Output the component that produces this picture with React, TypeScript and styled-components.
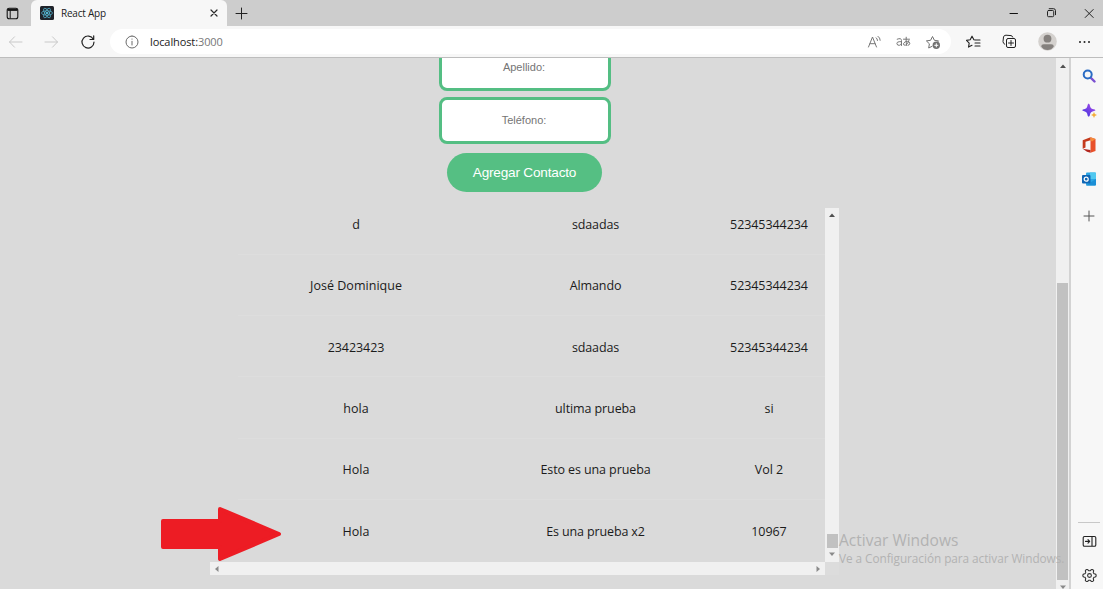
import React from "react";
import styled, { createGlobalStyle } from "styled-components";

const UI = `"Open Sans", "Noto Sans", sans-serif`;

const GlobalStyle = createGlobalStyle`
  * { box-sizing: border-box; }
  html, body { margin: 0; padding: 0; overflow: hidden; }
  body { font-family: ${UI}; background: #dadada; }
  svg { display: block; flex: none; }
`;

const Window = styled.div`
  width: 1103px;
  height: 589px;
  display: flex;
  flex-direction: column;
  overflow: hidden;
`;

const TabStrip = styled.header`
  height: 26px;
  flex: none;
  display: flex;
  background: #cdcdcd;
`;

const TabActions = styled.div`
  width: 31px;
  display: flex;
  align-items: center;
  padding-left: 6px;
`;

const Tab = styled.div`
  width: 196px;
  display: flex;
  align-items: center;
  padding: 0 8px 0 9px;
  border-radius: 6px 6px 0 0;
  background: #f7f7f7;
`;

const TabTitle = styled.span`
  flex: 1;
  margin-left: 7px;
  font-size: 10px;
  letter-spacing: -0.22px;
  line-height: 14px;
  color: #222;
`;

const NewTab = styled.div`
  display: flex;
  align-items: center;
  margin-left: 8px;
`;

const WindowButtons = styled.div`
  display: flex;
  align-items: center;
  gap: 26px;
  margin-left: auto;
  padding-right: 8px;
`;

const Toolbar = styled.div`
  height: 32px;
  flex: none;
  display: flex;
  align-items: center;
  background: #f7f7f7;
  border-bottom: 1px solid #bdbdbd;
`;

const NavButtons = styled.div`
  width: 110px;
  display: flex;
  align-items: center;
  gap: 21px;
  padding-left: 8px;
`;

const AddressBar = styled.div`
  width: 841px;
  height: 25px;
  display: flex;
  align-items: center;
  padding: 0 10px 0 15px;
  border-radius: 13px;
  background: #fff;
`;

const Url = styled.span`
  flex: 1;
  margin-left: 11px;
  font-size: 11px;
  letter-spacing: -0.1px;
  line-height: 16px;
  color: #1c1c1c;
  span { color: #777; }
`;

const AddressActions = styled.div`
  display: flex;
  align-items: center;
  gap: 14px;
`;

const BrowserActions = styled.div`
  display: flex;
  align-items: center;
  justify-content: space-between;
  flex: 1;
  padding: 0 12px 0 15px;
`;

const Body = styled.div`
  position: relative;
  flex: 1;
  display: flex;
  min-height: 0;
`;

const Page = styled.main`
  position: relative;
  width: 1056px;
  overflow: hidden;
  background: #dadada;
`;

const Form = styled.form`
  width: 172px;
  margin: -14px 0 0 439px;
  display: flex;
  flex-direction: column;
  align-items: center;
`;

const Field = styled.input`
  width: 172px;
  height: 47px;
  margin-bottom: 6px;
  padding: 0 2px 2px 0;
  border: 3px solid #54be83;
  border-radius: 8px;
  background: #fff;
  font: 11px "Liberation Sans", sans-serif;
  text-align: center;
  outline: none;
  &::placeholder { color: #757575; opacity: 1; }
`;

const Submit = styled.button`
  width: 155px;
  height: 39px;
  margin-top: 3px;
  padding: 0 0 1px;
  margin-right: 1px;
  border: 0;
  border-radius: 20px;
  background: #55bf83;
  color: #fff;
  font: 13.6px "Liberation Sans", sans-serif;
  letter-spacing: -0.2px;
`;

const TableFrame = styled.div`
  width: 629px;
  height: 367px;
  margin: 16px 0 0 210px;
  display: grid;
  grid-template-columns: 615px 14px;
  grid-template-rows: 354px 13px;
`;

const TableView = styled.div`
  overflow: hidden;
  padding-left: 28px;
`;

const Row = styled.div`
  height: 61.25px;
  display: grid;
  grid-template-columns: 236px 243px 104px;
  align-items: center;
  padding-top: 3px;
  border-bottom: 1px solid #dddddd;
  &:first-child { margin-top: -14.5px; }
  &:last-child { border-bottom: 0; }
`;

const Cell = styled.span<{ $spacing: number }>`
  text-align: center;
  font-size: 12.5px;
  line-height: 18px;
  letter-spacing: ${(p) => p.$spacing}px;
  color: #1b1b1b;
  white-space: nowrap;
`;

const VTrack = styled.div`
  display: flex;
  flex-direction: column;
  align-items: center;
  background: #f0f0f0;
`;

const HTrack = styled.div`
  display: flex;
  align-items: center;
  justify-content: space-between;
  padding: 0 4px;
  background: #f0f0f0;
`;

const Corner = styled.div`
  background: #dcdcdc;
`;

const Spacer = styled.div<{ $h: number }>`
  height: ${(p) => p.$h}px;
  flex: none;
`;

const Thumb = styled.div<{ $h: number }>`
  width: 11px;
  height: ${(p) => p.$h}px;
  flex: none;
  background: #c1c1c1;
`;

const PageTrack = styled(VTrack)`
  width: 13px;
  overflow: hidden;
`;

const Divider = styled.div`
  width: 2px;
  background: #d3d3d3;
`;

const Sidebar = styled.aside`
  flex: 1;
  display: flex;
  flex-direction: column;
  align-items: center;
  padding: 11px 0 6px 4px;
  background: #f7f7f7;
`;

const SideGroup = styled.div<{ $gap: number }>`
  display: flex;
  flex-direction: column;
  align-items: center;
  gap: ${(p) => p.$gap}px;
`;

const SideBottom = styled(SideGroup)`
  margin-top: auto;
`;

const SideRule = styled.div`
  width: 22px;
  height: 1px;
  margin-bottom: -8px;
  background: #c8c8c8;
`;

const Watermark = styled.div`
  position: absolute;
  left: 839px;
  top: 472px;
  color: #b2b2b2;
  white-space: nowrap;
`;

const WatermarkTitle = styled.div`
  font-size: 15.5px;
  line-height: 20px;
  letter-spacing: 0;
`;

const WatermarkText = styled.div`
  font-size: 11.8px;
  line-height: 17px;
  letter-spacing: -0.05px;
`;

const Pointer = styled.svg`
  position: absolute;
  left: 160px;
  top: 448px;
`;

const Arrow = ({ dir, color = "#8a8a8a" }: { dir: "up" | "down" | "left" | "right"; color?: string }) => {
  const d = { up: "M0 5 3 1.5 6 5Z", down: "M0 1.5 3 5 6 1.5Z", left: "M4.5 0 1 3 4.5 6Z", right: "M1.5 0 5 3 1.5 6Z" }[dir];
  return <svg width="6" height="6" viewBox="0 0 6 6"><path d={d} fill={color} /></svg>;
};

const Stroke = ({ w, h, d, color = "#2a2a2a", sw = 1 }: { w: number; h: number; d: string; color?: string; sw?: number }) => (
  <svg width={w} height={h} viewBox={`0 0 ${w} ${h}`} fill="none" stroke={color} strokeWidth={sw} strokeLinecap="round" strokeLinejoin="round">
    <path d={d} />
  </svg>
);

const ReactFavicon = () => (
  <svg width="14" height="14" viewBox="0 0 14 14">
    <rect width="14" height="14" rx="1.5" fill="#20232a" />
    <g fill="none" stroke="#58bcd8" strokeWidth=".7">
      <ellipse cx="7" cy="7" rx="5.4" ry="2.1" />
      <ellipse cx="7" cy="7" rx="5.4" ry="2.1" transform="rotate(60 7 7)" />
      <ellipse cx="7" cy="7" rx="5.4" ry="2.1" transform="rotate(120 7 7)" />
    </g>
    <circle cx="7" cy="7" r="1.1" fill="#61dafb" />
  </svg>
);

const gearPath = () => {
  const pts: string[] = [];
  for (let i = 0; i < 72; i++) {
    const a = (i / 72) * Math.PI * 2;
    const r = 5.7 + 0.95 * Math.tanh(2.2 * Math.cos(6 * a));
    pts.push(`${(7.5 + r * Math.cos(a)).toFixed(2)} ${(7.5 + r * Math.sin(a)).toFixed(2)}`);
  }
  return `M${pts.join("L")}Z`;
};

const rows: [string, number, string, number, string, number][] = [
  ["d", 0, "sdaadas", -0.12, "52345344234", -0.07],
  ["José Dominique", 0.03, "Almando", -0.1, "52345344234", -0.07],
  ["23423423", -0.07, "sdaadas", -0.12, "52345344234", -0.07],
  ["hola", 0, "ultima prueba", -0.1, "si", 0],
  ["Hola", 0, "Esto es una prueba", -0.1, "Vol 2", 0],
  ["Hola", 0, "Es una prueba x2", -0.13, "10967", -0.07],
];

export default function App() {
  return (
    <Window>
      <GlobalStyle />
      <TabStrip>
        <TabActions>
          <svg width="13" height="13" viewBox="0 0 13 13" fill="none" stroke="#151515">
            <rect x="1.2" y="1.2" width="10.6" height="10.6" rx="2" strokeWidth="1.1" />
            <path d="M1.5 2.8h10" strokeWidth="2.2" />
            <path d="M4.2 3v8.5" />
          </svg>
        </TabActions>
        <Tab>
          <ReactFavicon />
          <TabTitle>React App</TabTitle>
          <Stroke w={10} h={10} d="M2 2l6 6M8 2l-6 6" sw={1.2} />
        </Tab>
        <NewTab><Stroke w={13} h={13} d="M6.5 1v11M1 6.5h11" color="#222" /></NewTab>
        <WindowButtons>
          <Stroke w={10} h={10} d="M1 5.5h7.5" color="#111" />
          <Stroke w={12} h={12} d="M3.5 3.5h4.2q1 0 1 1v4.2q0 1-1 1H3.5q-1 0-1-1V4.5q0-1 1-1zM4.2 1.7h4.3q2 0 2 2v4" color="#222" />
          <Stroke w={12} h={12} d="M2.2 2.5l8 8M10.2 2.5l-8 8" color="#222" />
        </WindowButtons>
      </TabStrip>

      <Toolbar>
        <NavButtons>
          <Stroke w={15} h={14} d="M14 7H1.5M6.5 1.8L1.5 7l5 5.2" color="#c9c9c9" />
          <Stroke w={15} h={14} d="M1 7h12.5M8.5 1.8L13.5 7l-5 5.2" color="#c9c9c9" />
          <Stroke w={16} h={16} d="M13.3 5.2A6 6 0 1 0 14 8M13.7 1.8v3.7h-3.7" color="#222" sw={1.2} />
        </NavButtons>
        <AddressBar>
          <Stroke w={14} h={14} d="M7 1a6 6 0 1 1 0 12a6 6 0 1 1 0-12M7 6.3v3.7M7 4v.2" color="#6b6b6b" />
          <Url>localhost:<span>3000</span></Url>
          <AddressActions>
            <Stroke w={15} h={14} d="M1.5 12L5.5 2l4 10M3 8.7h5M9.2 2.8q1.3 1 1.3 2.7M11 1.3q2.2 1.5 2.2 4" color="#777" />
            <svg width="15" height="14" viewBox="0 0 15 14" fill="none" stroke="#777" strokeLinecap="round">
              <path d="M1.2 4.2q4.300-1.800 4.300 1.500V10.500M5.500 6.700H3.200q-2.500.2-2.300 2 .3 1.900 2.500 1.600 1.700-.4 2.100-1.800" />
              <path d="M7.500 4.200h6M10.200 2.200q-.4 5 .4 8.300M12.900 5.500q-1 4.200-3.700 4.800-2.200 0-1.600-2 1.200-2.200 4-1.900 2.500.4 2.200 2.400-.3 1.200-1.700 1.500" />
            </svg>
            <svg width="16" height="16" viewBox="0 0 16 16" fill="none" stroke="#707070" strokeLinejoin="round">
              <path d="M7.3 12.2L3.7 14l.7-4.2-3-2.9 4.2-.6L7.5 2.5l1.900 3.800 4.200.6-1 1" />
              <circle cx="11.3" cy="11.3" r="3.7" fill="#707070" stroke="none" />
              <path d="M11.3 9.3v4M9.3 11.3h4" stroke="#fff" />
            </svg>
          </AddressActions>
        </AddressBar>
        <BrowserActions>
          <Stroke w={15} h={14} d="M9.2 5L7.9 4.8 6 1.2 4.2 4.8l-3.700.6 2.700 2.700-.7 4L6 10.300M9.500 5h4.500M9 8h5M9 11h5" color="#222" sw={1.1} />
          <Stroke w={15} h={15} d="M6 4.500h6q1.500 0 1.500 1.500v6q0 1.500-1.500 1.500H6q-1.500 0-1.500-1.500V6q0-1.500 1.500-1.500M9 6.500v5M6.500 9h5M2.800 10.300Q1 9.500 1 7.500L1.500 3Q2 1 4 1.200l5 .4q1.500.3 1.800 1.500" color="#222" />
          <svg width="19" height="19" viewBox="0 0 19 19">
            <circle cx="9.5" cy="9.5" r="9.3" fill="#d4d1ce" />
            <circle cx="9.5" cy="6.7" r="3.9" fill="#85817e" />
            <path d="M3.2 14.5q0-2.300 2.500-2.300h7.600q2.500 0 2.500 2.300-2.300 3.500-6.300 3.500t-6.300-3.500z" fill="#85817e" />
          </svg>
          <svg width="13" height="4" viewBox="0 0 13 4" fill="#222"><circle cx="2" cy="2" r="1" /><circle cx="6.5" cy="2" r="1" /><circle cx="11" cy="2" r="1" /></svg>
        </BrowserActions>
      </Toolbar>

      <Body>
        <Page>
          <Form>
            <Field placeholder="Apellido:" />
            <Field placeholder="Teléfono:" />
            <Submit type="button">Agregar Contacto</Submit>
          </Form>
          <TableFrame>
            <TableView>
              {rows.map((r, i) => (
                <Row key={i}>
                  <Cell $spacing={r[1]}>{r[0]}</Cell>
                  <Cell $spacing={r[3]}>{r[2]}</Cell>
                  <Cell $spacing={r[5]}>{r[4]}</Cell>
                </Row>
              ))}
            </TableView>
            <VTrack>
              <Spacer $h={4} />
              <Arrow dir="up" color="#505050" />
              <Spacer $h={316} />
              <Thumb $h={14} />
              <Spacer $h={3} />
              <Arrow dir="down" />
            </VTrack>
            <HTrack><Arrow dir="left" /><Arrow dir="right" /></HTrack>
            <Corner />
          </TableFrame>
          <Pointer width="122" height="58" viewBox="0 0 122 58">
            <path d="M3 15h57V3L119 28 60 53V41H3z" fill="#ed1c24" stroke="#ed1c24" strokeWidth="4" strokeLinejoin="round" />
          </Pointer>
        </Page>
        <PageTrack>
          <Spacer $h={5} />
          <Arrow dir="up" color="#505050" />
          <Spacer $h={214} />
          <Thumb $h={297} />
          <Spacer $h={4} />
          <Arrow dir="down" />
        </PageTrack>
        <Divider />
        <Sidebar>
          <SideGroup $gap={19}>
            <svg width="14" height="15" viewBox="0 0 14 15" fill="none">
              <path d="M9 9l3.500 3.500" stroke="#7a4fd0" strokeWidth="2.400" strokeLinecap="round" />
              <circle cx="5.700" cy="5.500" r="4" stroke="#2a6cc4" strokeWidth="2" />
            </svg>
            <svg width="15" height="15" viewBox="0 0 15 15">
              <defs><linearGradient id="spark" x1="0" y1="1" x2="1" y2="0"><stop offset="0" stopColor="#3b35e0" /><stop offset="1" stopColor="#b04be8" /></linearGradient></defs>
              <path d="M6.700.500Q7.700.500 8.300 4 8.800 5.600 10.500 6q3 .6 3 1.200t-3 1.200q-1.700.4-2.200 2-.6 3.400-1.600 3.400t-1.600-3.400q-.5-1.600-2.200-2Q.2 7.800.2 7.200T2.900 6q1.700-.4 2.200-2Q5.700.5 6.700.5z" fill="url(#spark)" />
              <path d="M12 9l.9 2.100L15 12l-2.100.9L12 15l-.9-2.100L9 12l2.100-.9z" fill="#f2ae3c" />
            </svg>
            <svg width="14" height="16" viewBox="0 0 14 16">
              <path d="M8.500.300L13.500 2v12l-5 1.700z" fill="#e8502a" />
              <path d="M8.500.300L.7 3.200v8.500L3.500 10.500V4.800l5-1.500z" fill="#c43a1c" />
              <path d="M8.500.300L13.500 2 10 4.500l-1.500-1z" fill="#f58b3a" />
              <path d="M.7 11.700L8.500 13v2.700L5 14.800z" fill="#b3261e" />
            </svg>
            <svg width="14" height="14" viewBox="0 0 14 14">
              <rect x="4" y=".5" width="10" height="13" rx="1" fill="#2aa5e4" />
              <path d="M8 .5h5q1 0 1 1V7H8z" fill="#50c8f0" />
              <path d="M4 13.500L14 7v5.500q0 1-1 1z" fill="#1b8fd6" />
              <rect y="3" width="8.5" height="8.5" rx="1" fill="#0f66b5" />
              <circle cx="4.2" cy="7.2" r="2" fill="none" stroke="#fff" strokeWidth="1.2" />
            </svg>
          </SideGroup>
          <Spacer $h={24} />
          <Stroke w={12} h={12} d="M6 1v10M1 6h10" color="#555" />
          <SideBottom $gap={20}>
            <SideRule />
            <Stroke w={15} h={13} d="M2.500 1.500h10q1.300 0 1.300 1.300v7.200q0 1.300-1.300 1.300h-10q-1.300 0-1.300-1.300V2.800q0-1.300 1.300-1.300M10 1.500v9.800M3.500 6.400h4M6 4.700l1.700 1.700L6 8.100" color="#222" sw={1.1} />
            <svg width="15" height="15" viewBox="0 0 15 15" fill="none" stroke="#333" strokeWidth="1.1" strokeLinejoin="round">
              <path d={gearPath()} />
              <circle cx="7.5" cy="7.5" r="1.9" />
            </svg>
          </SideBottom>
        </Sidebar>
        <Watermark>
          <WatermarkTitle>Activar Windows</WatermarkTitle>
          <WatermarkText>Ve a Configuración para activar Windows.</WatermarkText>
        </Watermark>
      </Body>
    </Window>
  );
}
